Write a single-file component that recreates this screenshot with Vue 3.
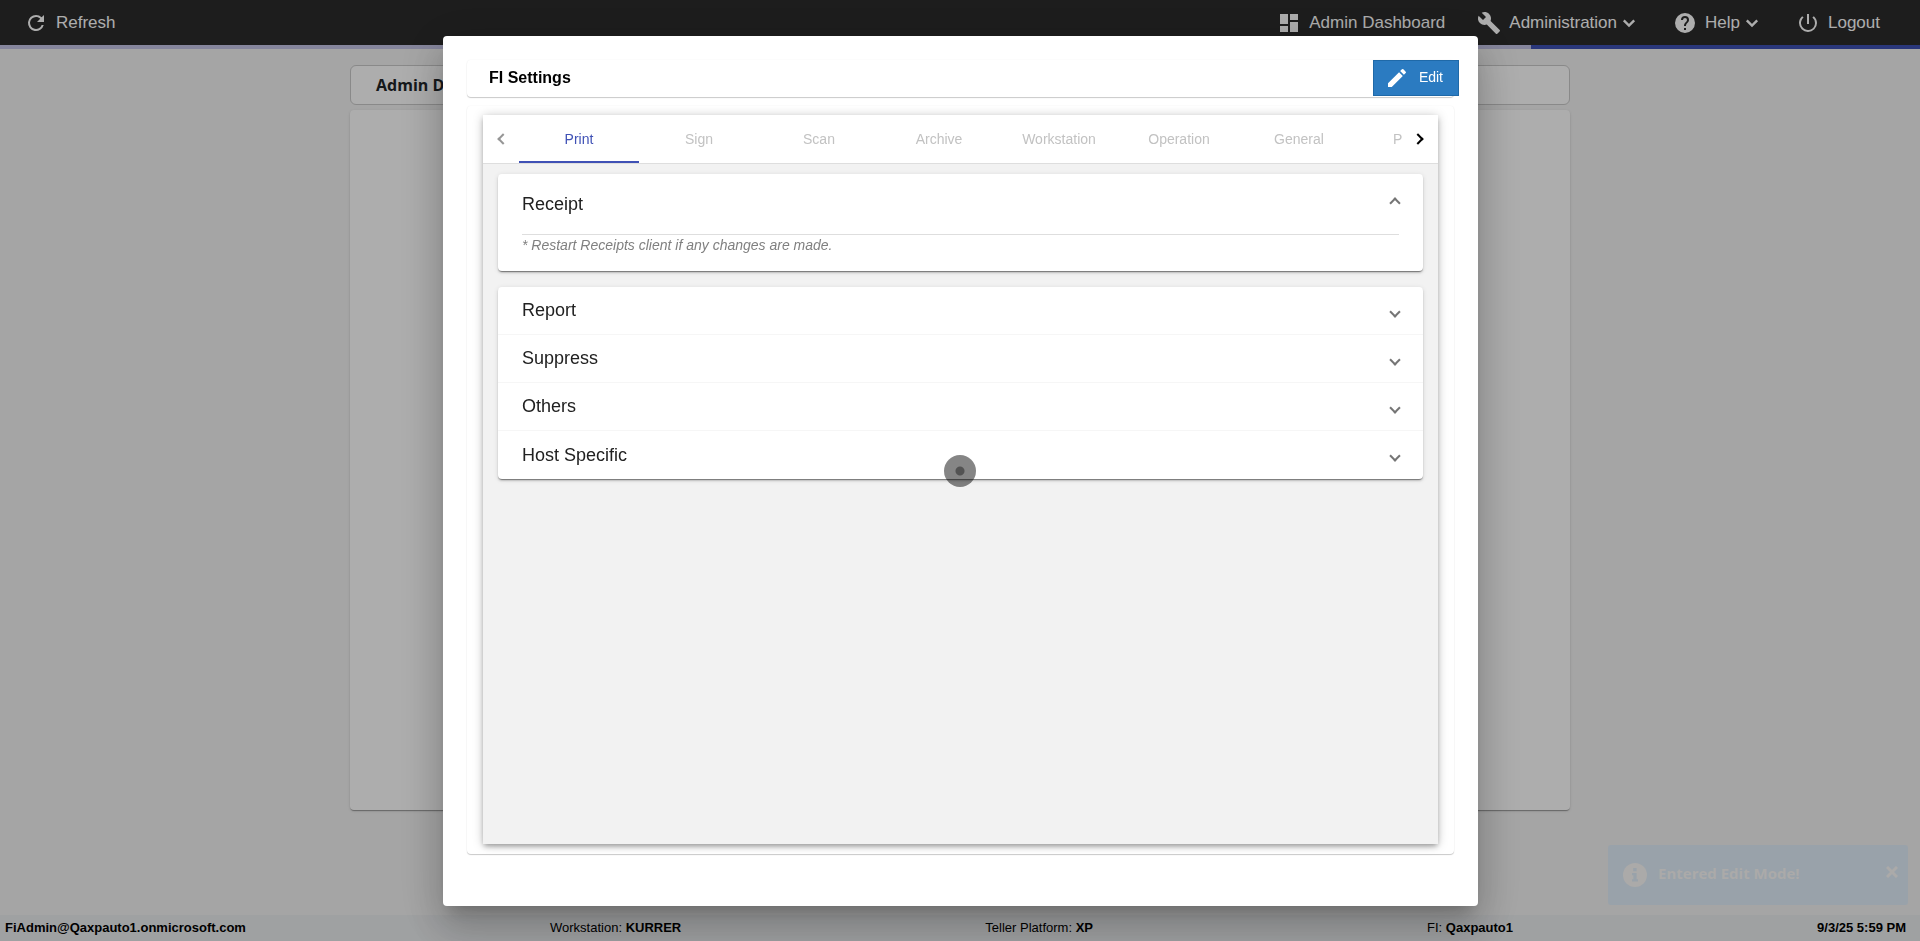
<script setup>
import { ref } from 'vue'

const tabs = ['Print', 'Sign', 'Scan', 'Archive', 'Workstation', 'Operation', 'General', 'Platform']
const activeTab = ref('Print')
const sections = ['Report', 'Suppress', 'Others', 'Host Specific']
const receiptOpen = ref(true)
</script>

<template>
  <div class="page">
    <header class="topbar">
      <button class="nav-item" type="button">
        <svg class="icon" viewBox="0 0 24 24" aria-hidden="true"><path d="M17.65 6.35A7.96 7.96 0 0 0 12 4a8 8 0 1 0 7.73 10h-2.08A6 6 0 1 1 12 6c1.66 0 3.14.69 4.22 1.78L13 11h7V4z" /></svg>
        <span class="nav-label">Refresh</span>
      </button>
      <nav class="nav-group">
        <button class="nav-item" type="button">
          <svg class="icon" viewBox="0 0 24 24" aria-hidden="true"><path d="M3 13h8V3H3zm0 8h8v-6H3zm10 0h8V11h-8zm0-18v6h8V3z" /></svg>
          <span class="nav-label">Admin Dashboard</span>
        </button>
        <button class="nav-item" type="button">
          <svg class="icon" viewBox="0 0 24 24" aria-hidden="true"><path d="M22.7 19l-9.100-9.100c.9-2.300.4-5-1.500-6.900-2-2-5-2.400-7.400-1.300L9 6 6 9 1.600 4.700C.4 7.100.9 10.100 2.900 12.100c1.900 1.900 4.600 2.400 6.900 1.500l9.100 9.100c.4.4 1 .4 1.400 0l2.300-2.300c.5-.4.5-1.100.1-1.400z" /></svg>
          <span class="nav-label">Administration</span>
          <svg class="icon" viewBox="0 0 24 24" aria-hidden="true"><path class="caret" d="M6.800 9.400L12 14.600l5.200-5.200" /></svg>
        </button>
        <button class="nav-item" type="button">
          <svg class="icon" viewBox="0 0 24 24" aria-hidden="true"><path d="M12 2a10 10 0 1 0 0 20 10 10 0 0 0 0-20zm1 17h-2v-2h2zm2.070-7.750l-.9.920C13.450 12.900 13 13.500 13 15h-2v-.5c0-1.100.450-2.100 1.170-2.830l1.240-1.260c.370-.360.590-.860.590-1.410a2 2 0 1 0-4 0H8a4 4 0 1 1 8 0c0 .880-.360 1.680-.930 2.250z" /></svg>
          <span class="nav-label">Help</span>
          <svg class="icon" viewBox="0 0 24 24" aria-hidden="true"><path class="caret" d="M6.800 9.400L12 14.600l5.200-5.200" /></svg>
        </button>
        <button class="nav-item" type="button">
          <svg class="icon" viewBox="0 0 24 24" aria-hidden="true"><path d="M13 3h-2v10h2zm4.830 2.170l-1.420 1.420A6.920 6.920 0 0 1 19 12a7 7 0 1 1-11.420-5.420L6.170 5.170A8.930 8.930 0 0 0 3 12a9 9 0 0 0 18 0c0-2.740-1.230-5.180-3.170-6.830z" /></svg>
          <span class="nav-label">Logout</span>
        </button>
      </nav>
    </header>
    <div class="loader"><div class="loader-fill"></div></div>

    <main class="workspace">
      <h1 class="workspace-title">Admin Dashboard</h1>
      <div class="workspace-body"></div>
    </main>

    <footer class="statusbar">
      <b>FiAdmin@Qaxpauto1.onmicrosoft.com</b>
      <span>Workstation: <b>KURRER</b></span>
      <span class="status-platform">Teller Platform: <b>XP</b></span>
      <span>FI: <b>Qaxpauto1</b></span>
      <b>9/3/25 5:59 PM</b>
    </footer>

    <div class="backdrop">
      <section class="dialog" role="dialog" aria-modal="true" aria-labelledby="dialog-title">
        <div class="dialog-head">
          <h2 id="dialog-title" class="dialog-title">FI Settings</h2>
          <button class="edit-button" type="button">
            <svg class="icon" viewBox="0 0 24 24" aria-hidden="true"><path d="M3 17.250V21h3.750L17.810 9.940l-3.750-3.750zM20.710 7.040a1 1 0 0 0 0-1.410l-2.340-2.340a1 1 0 0 0-1.410 0l-1.830 1.830 3.750 3.750z" /></svg>
            <span class="edit-label">Edit</span>
          </button>
        </div>

        <div class="dialog-card">
          <div class="settings">
            <div class="tabs">
              <button class="pager" type="button" aria-label="Previous tabs" disabled>
                <span class="arrow arrow-left"></span>
              </button>
              <div class="tab-list" role="tablist">
                <button
                  v-for="tab in tabs"
                  :key="tab"
                  class="tab"
                  :class="{ active: tab === activeTab }"
                  type="button"
                  role="tab"
                  :aria-selected="tab === activeTab"
                  @click="activeTab = tab"
                >{{ tab }}</button>
              </div>
              <button class="pager" type="button" aria-label="Next tabs">
                <span class="arrow arrow-right"></span>
              </button>
            </div>

            <div class="panels">
              <div class="panel">
                <button class="panel-head panel-head-open" type="button" :aria-expanded="receiptOpen" @click="receiptOpen = !receiptOpen">
                  <span>Receipt</span>
                  <span class="arrow arrow-up"></span>
                </button>
                <p v-if="receiptOpen" class="panel-note">* Restart Receipts client if any changes are made.</p>
              </div>
              <div class="panel">
                <button v-for="name in sections" :key="name" class="panel-head panel-row" type="button" aria-expanded="false">
                  <span>{{ name }}</span>
                  <span class="arrow arrow-down"></span>
                </button>
              </div>
            </div>
          </div>
        </div>
      </section>
      <span class="pointer"></span>
    </div>

    <div class="toast" role="status">
      <svg class="toast-icon" viewBox="0 0 24 24" aria-hidden="true">
        <circle class="toast-disc" cx="12" cy="12" r="12" />
        <path class="toast-mark" d="M10.200 5h3.400v3.200h-3.400zM9 10h4.600v6.200H15v2.300H9v-2.300h1.400v-3.900H9z" />
      </svg>
      <span class="toast-text">Entered Edit Mode!</span>
      <button class="toast-close" type="button" aria-label="Close">
        <svg class="close-icon" viewBox="0 0 12 12" aria-hidden="true"><path d="M1 1l10 10M11 1l-10 10" /></svg>
      </button>
    </div>
  </div>
</template>

<style>
body {
  margin: 0;
}
</style>

<style scoped>
.page,
.page * {
  box-sizing: border-box;
}

.page {
  display: flex;
  flex-direction: column;
  min-height: 100vh;
  background: #f3f3f3;
  font-family: "Liberation Sans", Arial, sans-serif;
  color: #000;
}

button {
  margin: 0;
  padding: 0;
  border: 0;
  background: none;
  color: inherit;
  font: inherit;
  cursor: pointer;
}

.icon {
  width: 24px;
  height: 24px;
  flex: none;
  fill: currentColor;
}

.caret {
  fill: none;
  stroke: currentColor;
  stroke-width: 2.4;
}

.topbar {
  display: flex;
  justify-content: space-between;
  align-items: center;
  height: 45px;
  padding: 0 40px 0 24px;
  background: #2b2b2b;
  color: #fff;
}

.nav-group {
  display: flex;
  gap: 32px;
}

.nav-item {
  display: flex;
  align-items: center;
  font-size: 17px;
  line-height: 24px;
}

.nav-label {
  padding-left: 8px;
}

.loader {
  height: 4px;
  background: #3f51b5;
}

.loader-fill {
  width: calc(80% - 5px);
  height: 4px;
  background: #c5c5e6;
}

.workspace {
  display: flex;
  flex-direction: column;
  gap: 5px;
  flex: 1;
  width: 100%;
  max-width: 1220px;
  margin: 0 auto;
  padding: 16px 0 105px;
}

.workspace-title {
  margin: 0;
  padding: 0 25px;
  border: 1px solid #cacaca;
  border-radius: 6px;
  background: #fff;
  color: #212529;
  font: bold 16px/38px "Open Sans", "Noto Sans", sans-serif;
}

.workspace-body {
  flex: 1;
  border-radius: 4px;
  background: #fff;
  box-shadow: 0 2px 1px -1px rgba(0, 0, 0, 0.2), 0 1px 1px rgba(0, 0, 0, 0.14), 0 1px 3px rgba(0, 0, 0, 0.12);
}

.statusbar {
  display: flex;
  justify-content: space-between;
  height: 26px;
  padding: 0 14px 0 5px;
  background: #ebedef;
  font-size: 13px;
  line-height: 26px;
}

.status-platform {
  padding-right: 30px;
}

.backdrop {
  position: fixed;
  inset: 0;
  display: flex;
  padding: 36px 442px 35px 443px;
  background: rgba(0, 0, 0, 0.32);
}

.dialog {
  display: flex;
  flex-direction: column;
  gap: 9px;
  flex: 1;
  min-width: 0;
  padding: 24px 24px 52px;
  border-radius: 4px;
  background: #fff;
  box-shadow: 0 11px 15px -7px rgba(0, 0, 0, 0.2), 0 24px 38px 3px rgba(0, 0, 0, 0.14), 0 9px 46px 8px rgba(0, 0, 0, 0.12);
}

.dialog-head,
.dialog-card {
  border-radius: 4px;
  box-shadow: 0 1px 1px rgba(0, 0, 0, 0.2), 0 0 2px rgba(0, 0, 0, 0.06);
}

.dialog-head {
  display: flex;
  justify-content: space-between;
  align-items: flex-start;
  height: 37px;
  padding-left: 22px;
}

.dialog-title {
  margin: 0;
  font-size: 16px;
  line-height: 36px;
}

.edit-button {
  display: flex;
  align-items: center;
  gap: 10px;
  height: 36px;
  margin-right: -5px;
  padding: 0 15px 0 11px;
  border: 1px solid #1f69a8;
  background: #2b7bc1;
  color: #fff;
  font-size: 14px;
}

.edit-label {
  padding-bottom: 2px;
}

.dialog-card {
  display: flex;
  flex: 1;
  padding: 9px 16px 10px;
}

.settings {
  display: flex;
  flex-direction: column;
  flex: 1;
  min-width: 0;
  background: #f2f2f2;
  box-shadow: 0 3px 5px -1px rgba(0, 0, 0, 0.3), 0 1px 10px rgba(0, 0, 0, 0.22);
}

.tabs {
  display: flex;
  border-bottom: 1px solid #dedede;
  background: #fff;
}

.pager {
  display: flex;
  align-items: center;
  justify-content: center;
  width: 36px;
  flex: none;
}

.tab-list {
  display: flex;
  flex: 1;
  min-width: 0;
  overflow: hidden;
}

.tab {
  flex: 0 0 120px;
  height: 48px;
  border-bottom: 2px solid transparent;
  padding-top: 2px;
  color: #c2c2c2;
  font-size: 14px;
}

.tab.active {
  border-bottom-color: #3f51b5;
  color: #3f51b5;
}

.arrow {
  display: block;
  width: 8px;
  height: 8px;
  flex: none;
  border: solid #757575;
  border-width: 0 2px 2px 0;
}

.arrow-left {
  margin-left: 4px;
  border-color: #969696;
  transform: rotate(135deg);
}

.arrow-right {
  margin-right: 4px;
  border-color: #000;
  transform: rotate(-45deg);
}

.arrow-down {
  margin-top: 2px;
  transform: rotate(45deg);
}

.arrow-up {
  margin-bottom: 2px;
  transform: rotate(-135deg);
}

.panels {
  display: flex;
  flex-direction: column;
  gap: 16px;
  padding: 10px 15px;
}

.panel {
  border-radius: 4px;
  background: #fff;
  box-shadow: 0 3px 1px -2px rgba(0, 0, 0, 0.2), 0 2px 2px rgba(0, 0, 0, 0.14), 0 1px 5px rgba(0, 0, 0, 0.12), 0 1px 0 rgba(0, 0, 0, 0.2);
}

.panel-head {
  display: flex;
  align-items: center;
  justify-content: space-between;
  width: 100%;
  height: 48px;
  padding: 0 24px;
  color: #212121;
  font-size: 18px;
  text-align: left;
}

.panel-row:not(:last-child) {
  border-bottom: 1px solid #f6f6f6;
}

.panel-head-open {
  height: 60px;
}

.panel-note {
  margin: 0 24px;
  padding-bottom: 16px;
  border-top: 1px solid #dedede;
  color: #808080;
  font-size: 14px;
  font-style: italic;
  line-height: 20px;
}

.pointer {
  position: absolute;
  top: 50%;
  left: 50%;
  width: 32px;
  height: 32px;
  border-radius: 50%;
  background: radial-gradient(circle, rgba(0, 0, 0, 0.68) 4px, rgba(0, 0, 0, 0.48) 5px);
  transform: translate(-50%, -50%);
}

.toast {
  position: fixed;
  right: 12px;
  bottom: 36px;
  display: flex;
  align-items: center;
  width: 300px;
  height: 60px;
  padding: 0 10px 0 15px;
  border-radius: 3px;
  background: #99a2aa;
  color: #abaaa9;
}

.toast-icon {
  width: 24px;
  height: 24px;
  flex: none;
}

.toast-disc {
  fill: #abaaa9;
}

.toast-mark {
  fill: #99a2aa;
}

.toast-text {
  flex: 1;
  padding: 0 0 4px 11px;
  font: bold 15px/24px "Open Sans", "Noto Sans", sans-serif;
}

.toast-close {
  display: flex;
  padding-bottom: 6px;
}

.close-icon {
  width: 12px;
  height: 12px;
  fill: none;
  stroke: #abaaa9;
  stroke-width: 3;
}
</style>
